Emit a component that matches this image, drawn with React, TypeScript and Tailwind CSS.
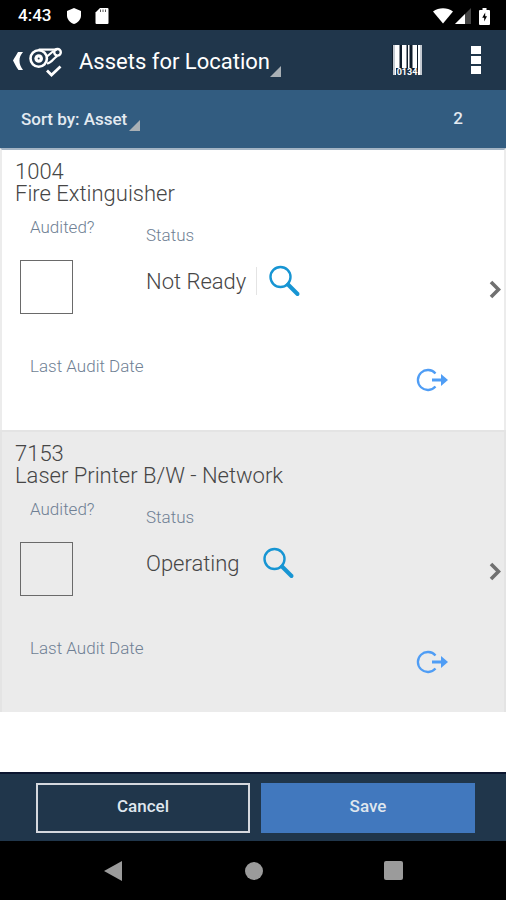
type Asset = {
  id: string;
  name: string;
  status: string;
  divider: boolean;
};

const assets: Asset[] = [
  { id: '1004', name: 'Fire Extinguisher', status: 'Not Ready', divider: true },
  { id: '7153', name: 'Laser Printer B/W - Network', status: 'Operating', divider: false },
];

function StatusBar() {
  return (
    <div className="flex h-[30px] items-center bg-black pl-[18px] pr-4 pt-0.5 text-white">
      <span className="text-[17px] font-medium">4:43</span>
      <svg className="ml-4 h-4 w-[14px]" viewBox="0 0 14 16" fill="currentColor">
        <path d="M7 0L14 3V7.500C14 11.500 11 14.700 7 16C3 14.700 0 11.500 0 7.500V3Z" />
      </svg>
      <svg className="ml-3.5 h-4 w-[14px]" viewBox="0 0 14 16" fill="currentColor">
        <path d="M5 0H12.500Q13.500 0 13.500 1V15Q13.500 16 12.500 16H1.500Q.5 16 .5 15V4.500Z" />
        <path d="M5.500 1.500V4M8 1.500V4M10.500 1.500V4" stroke="#555" strokeWidth="1" />
      </svg>
      <svg className="ml-auto h-4 w-5" viewBox="0 0 20 16" fill="currentColor">
        <path d="M0 3.500C6 -.8 14 -.8 20 3.500L10 15.500Z" />
      </svg>
      <svg className="ml-0.5 h-4 w-4" viewBox="0 0 16 16" fill="currentColor">
        <path d="M16 0V16H0Z" fill="#444" />
        <path d="M10 6V16H0Z" />
      </svg>
      <svg className="ml-2 h-[17px] w-[11px]" viewBox="0 0 11 17">
        <path d="M3.500 0H7.500V2H10Q11 2 11 3V16Q11 17 10 17H1Q0 17 0 16V3Q0 2 1 2H3.500Z" fill="currentColor" />
        <path d="M6.200 4.500L3.200 9.800H5.200V13.500L8 8.300H6.200Z" fill="#000" />
      </svg>
    </div>
  );
}

function Corner() {
  return (
    <svg className="h-[11px] w-[11px] text-[#a9b0b5]" viewBox="0 0 11 11" fill="currentColor">
      <path d="M11 0V11H0Z" />
    </svg>
  );
}

function Header() {
  return (
    <header className="flex h-[60px] items-center bg-[#20364b] pl-3 pr-[25px] text-white">
      <button aria-label="Back" className="flex items-center">
        <svg className="h-[22px] w-[13px]" viewBox="0 0 13 22" fill="currentColor">
          <path d="M6 3H11C8.500 6 7.500 8.500 7.500 11.500C7.500 15 8.500 17.500 11 21H6.500C4.500 18.500 3 15.500 1 11.500C3 8 4.500 5.500 6 3Z" />
        </svg>
        <svg className="ml-1 h-[34px] w-[34px]" viewBox="0 0 34 34" fill="none" stroke="currentColor">
          <circle cx="9.700" cy="15.500" r="8.200" strokeWidth="2.600" />
          <circle cx="9.700" cy="15.500" r="4.300" fill="currentColor" stroke="none" />
          <circle cx="9.700" cy="15.500" r="1" fill="#20364b" stroke="none" />
          <path d="M9.700 6.600H28" strokeWidth="2.200" />
          <circle cx="28.500" cy="9.300" r="3.300" strokeWidth="2.400" />
          <path d="M28.500 13C25 14 23 20 18 20.500M24.500 8L18 13.500" strokeWidth="2.200" />
          <path d="M18 27.500L22.500 32L31.500 23.500" strokeWidth="2.800" />
        </svg>
      </button>
      <button className="ml-4 flex items-end pt-1 text-[22px] leading-[30px]">
        <span>Assets for Location</span>
        <Corner />
      </button>
      <button aria-label="Scan barcode" className="ml-auto">
        <svg className="h-8 w-[30px]" viewBox="0 0 30 32" fill="currentColor">
          <path d="M0 1H30V26H0Z" fill="#101d2b" />
          <path d="M1 1H3V31H1ZM28 1H30V31H28Z" fill="#c4cad1" />
          <path d="M3 1H7.500V24H3ZM3 24H4V31H3ZM10 1H14.500V24H10ZM16 1H17.500V24H16ZM20.500 1H25V24H20.500ZM26 1H28V31H26Z" />
          <text x="15" y="31" textAnchor="middle" fontSize="9" fontWeight="bold" fontFamily="Roboto">
            0134
          </text>
        </svg>
      </button>
      <button aria-label="More options" className="ml-[49px] flex flex-col gap-0.5">
        <span className="h-2 w-[10px] bg-white" />
        <span className="h-2 w-[10px] bg-white" />
        <span className="h-2 w-[10px] bg-white" />
      </button>
    </header>
  );
}

function SortBar() {
  return (
    <div className="flex h-[58px] items-center justify-between bg-[#325c80] pl-[21px] pr-[43px] text-[17px] font-medium text-[#e3eaf1]">
      <button className="flex items-end gap-0.5 leading-6">
        <span>Sort by: Asset</span>
        <Corner />
      </button>
      <span>2</span>
    </div>
  );
}

function AssetRow({ asset, shaded }: { asset: Asset; shaded: boolean }) {
  const checkId = `audited-${asset.id}`;
  return (
    <li
      className={
        shaded
          ? 'flex items-center border-x-2 border-t-2 border-[#e4e4e4] bg-[#ebebeb]'
          : 'flex items-center border-x-2 border-t-2 border-[#ececec] border-t-[#a4b4c4] bg-white'
      }
    >
      <div className="flex-1 pb-[26px] pt-[11px]">
        <div className="whitespace-pre-line pl-[13px] text-[22px] font-light leading-[22px] text-[#464646]">
          {`${asset.id}\n${asset.name}`}
        </div>
        <div className="flex">
          <div className="w-36 pt-3">
            <label htmlFor={checkId} className="block pl-7 text-[17px] font-light leading-5 text-[#6f7f94]">
              Audited?
            </label>
            <input
              id={checkId}
              type="checkbox"
              className="ml-[18px] mt-[23px] block h-[54px] w-[53px] appearance-none border border-[#6a6a6a] checked:bg-[#325c80]"
            />
          </div>
          <div className="pt-5">
            <div className="text-[17px] font-light leading-5 text-[#6f7f94]">Status</div>
            <div className="mt-4 flex h-10 items-center">
              <span className="text-[22px] font-light text-[#464646]">{asset.status}</span>
              <span className={asset.divider ? 'ml-2.5 h-7 w-px bg-[#e4e4e4]' : 'ml-2.5 h-7 w-px'} />
              <button aria-label="Look up status" className="ml-3">
                <svg className="h-8 w-8 text-[#1795d3]" viewBox="0 0 32 32" fill="none" stroke="currentColor">
                  <circle cx="11.500" cy="12" r="10" strokeWidth="2.400" />
                  <path d="M19 19.500L28.500 29" strokeWidth="4" strokeLinecap="round" />
                </svg>
              </button>
            </div>
          </div>
        </div>
        <div className="mt-[42px] flex h-12 items-center justify-between pl-7">
          <span className="self-start text-[17px] font-light leading-5 text-[#6f7f94]">Last Audit Date</span>
          <button aria-label="Move asset" className="mr-[37px]">
            <svg className="h-6 w-8 text-[#4f9df5]" viewBox="0 0 32 24" fill="none" stroke="currentColor">
              <path d="M19.500 5.500A10 10 0 1 0 19.500 18.500" strokeWidth="2.300" />
              <path d="M16 12H27" strokeWidth="3" />
              <path d="M25 6L32 12L25 18Z" fill="currentColor" stroke="none" />
            </svg>
          </button>
        </div>
      </div>
      <button aria-label="Open asset" className="mr-[3px] w-4">
        <svg className="ml-1 h-5 w-3 text-[#707070]" viewBox="0 0 12 20" fill="none" stroke="currentColor">
          <path d="M2 2L9.500 9.500L2 17" strokeWidth="3.600" />
        </svg>
      </button>
    </li>
  );
}

function NavBar() {
  return (
    <nav className="flex h-[59px] items-center justify-center gap-[121px] bg-black text-[#9b9b9b]">
      <button aria-label="Back">
        <svg className="h-5 w-5" viewBox="0 0 20 20" fill="currentColor">
          <path d="M18 0V20L0 10Z" />
        </svg>
      </button>
      <button aria-label="Home" className="h-[18px] w-[18px] rounded-full bg-[#9b9b9b]" />
      <button aria-label="Recent apps" className="h-[19px] w-[19px] rounded-xs bg-[#9b9b9b]" />
    </nav>
  );
}

export default function App() {
  return (
    <div className="flex min-h-screen flex-col bg-white font-['Roboto',sans-serif]">
      <StatusBar />
      <Header />
      <SortBar />
      <ul className="flex-1">
        {assets.map((asset, i) => (
          <AssetRow key={asset.id} asset={asset} shaded={i % 2 === 1} />
        ))}
      </ul>
      <footer className="flex gap-[11px] border-t-2 border-[#0c1630] bg-[#20364b] pb-2 pl-9 pr-[31px] pt-[9px] text-[17px] font-medium text-[#dfe6ee]">
        <button className="h-[50px] flex-1 border-2 border-[#d5d8de] pb-0.5">Cancel</button>
        <button className="h-[50px] flex-1 border-2 border-[#4178be] bg-[#4178be] pb-0.5">Save</button>
      </footer>
      <NavBar />
    </div>
  );
}
